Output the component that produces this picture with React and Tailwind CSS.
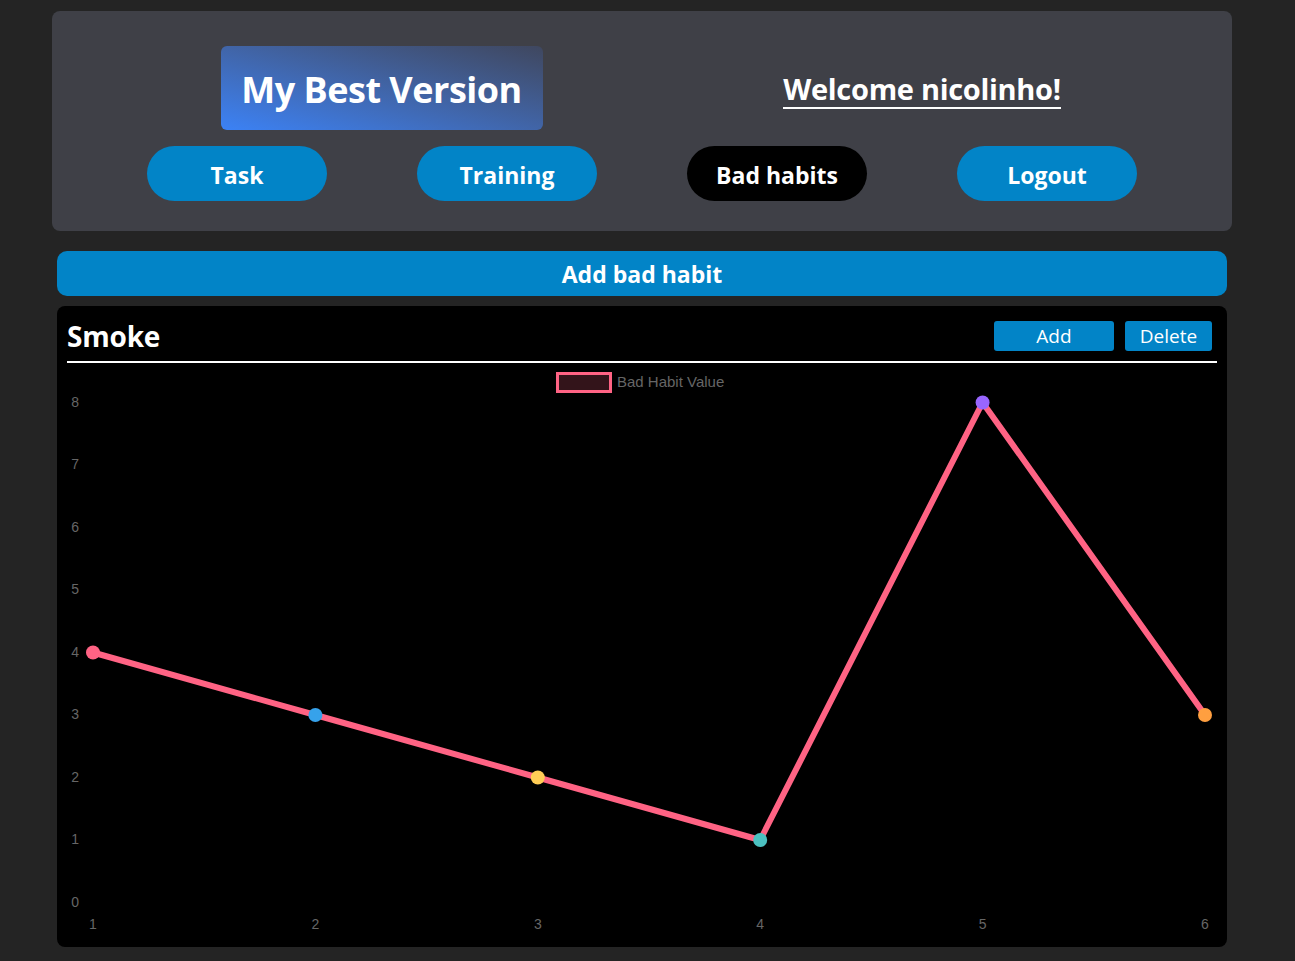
import React from "react";

const data = [4, 3, 2, 1, 8, 3];
const pointColors = ["#ff6384", "#36a2eb", "#ffcd56", "#4bc0c0", "#9966ff", "#ff9f40"];

const px = (i) => 26 + 222.4 * i;
const py = (v) => 539.5 - 62.5 * v;

function HabitChart() {
  const linePoints = data.map((v, i) => `${px(i)},${py(v)}`).join(" ");
  return (
    <svg width="1150" height="580" className="block" style={{ fontFamily: "'Liberation Sans', Arial, sans-serif" }}>
      {/* legend */}
      <rect x="490.5" y="10.5" width="53" height="18" fill="#33141a" stroke="#ff6384" strokeWidth="3" />
      <text x="550" y="24" fontSize="15" fill="#666">Bad Habit Value</text>

      {/* y axis labels */}
      {[0, 1, 2, 3, 4, 5, 6, 7, 8].map((v) => (
        <text key={v} x="12" y={py(v) + 4} fontSize="14" fill="#666" textAnchor="end">
          {v}
        </text>
      ))}

      {/* x axis labels */}
      {data.map((_, i) => (
        <text key={i} x={px(i)} y="566" fontSize="14" fill="#666" textAnchor="middle">
          {i + 1}
        </text>
      ))}

      <polyline points={linePoints} fill="none" stroke="#ff6384" strokeWidth="6" strokeLinejoin="round" />

      {data.map((v, i) => (
        <circle key={i} cx={px(i)} cy={py(v)} r="7" fill={pointColors[i]} />
      ))}
    </svg>
  );
}

export default function App() {
  return (
    <div
      className="min-h-screen bg-[#242424] px-[52px] pt-[11px] text-white"
      style={{ fontFamily: "'Open Sans', 'Noto Sans', sans-serif" }}
    >
      {/* Header */}
      <header className="w-[1180px] rounded-lg bg-[#3f4047] pt-[35px] pb-[30px]">
        <div className="flex items-center justify-center gap-[240px]">
          <div className="-ml-[2px] flex h-[84px] w-[322px] items-center justify-center rounded-md bg-linear-to-tr from-[#3b82f6] to-[#3f475f]">
            <h1 className="pt-[3px] text-[36px] font-bold tracking-[-0.5px]">My Best Version</h1>
          </div>
          <div className="flex w-[279px] justify-center">
            <span className="mt-[4px] border-b-2 border-white text-[29px] leading-[36px] font-bold tracking-[-0.3px]">
              Welcome nicolinho!
            </span>
          </div>
        </div>
        <nav className="mt-4 flex justify-center gap-[90px]">
          {["Task", "Training", "Bad habits", "Logout"].map((label) => (
            <button
              key={label}
              className={`h-[55px] w-[180px] rounded-full pt-[3px] text-[23px] font-bold ${
                label === "Bad habits" ? "bg-black" : "bg-[#0284c7]"
              }`}
            >
              {label}
            </button>
          ))}
        </nav>
      </header>

      <div className="ml-[5px] w-[1170px]">
        {/* Add bad habit */}
        <button className="mt-[20px] h-[45px] w-full rounded-[10px] bg-[#0284c7] pt-[2px] text-[23px] font-bold">
          Add bad habit
        </button>

        {/* Chart card */}
        <div className="mt-[10px] rounded-lg bg-black px-[10px] pt-[15px] pb-[4px]">
          <div className="flex h-[30px] items-center justify-between">
            <h2 className="text-[28px] font-bold tracking-[-0.2px]">Smoke</h2>
            <div className="mr-[5px] flex gap-[11px]">
              <button className="h-[30px] w-[120px] rounded-[3px] bg-[#0284c7] text-[19px]">Add</button>
              <button className="h-[30px] w-[87px] rounded-[3px] bg-[#0284c7] text-[19px]">Delete</button>
            </div>
          </div>
          <div className="mt-[10px] h-[2px] bg-white" />
          <HabitChart />
        </div>
      </div>
    </div>
  );
}
